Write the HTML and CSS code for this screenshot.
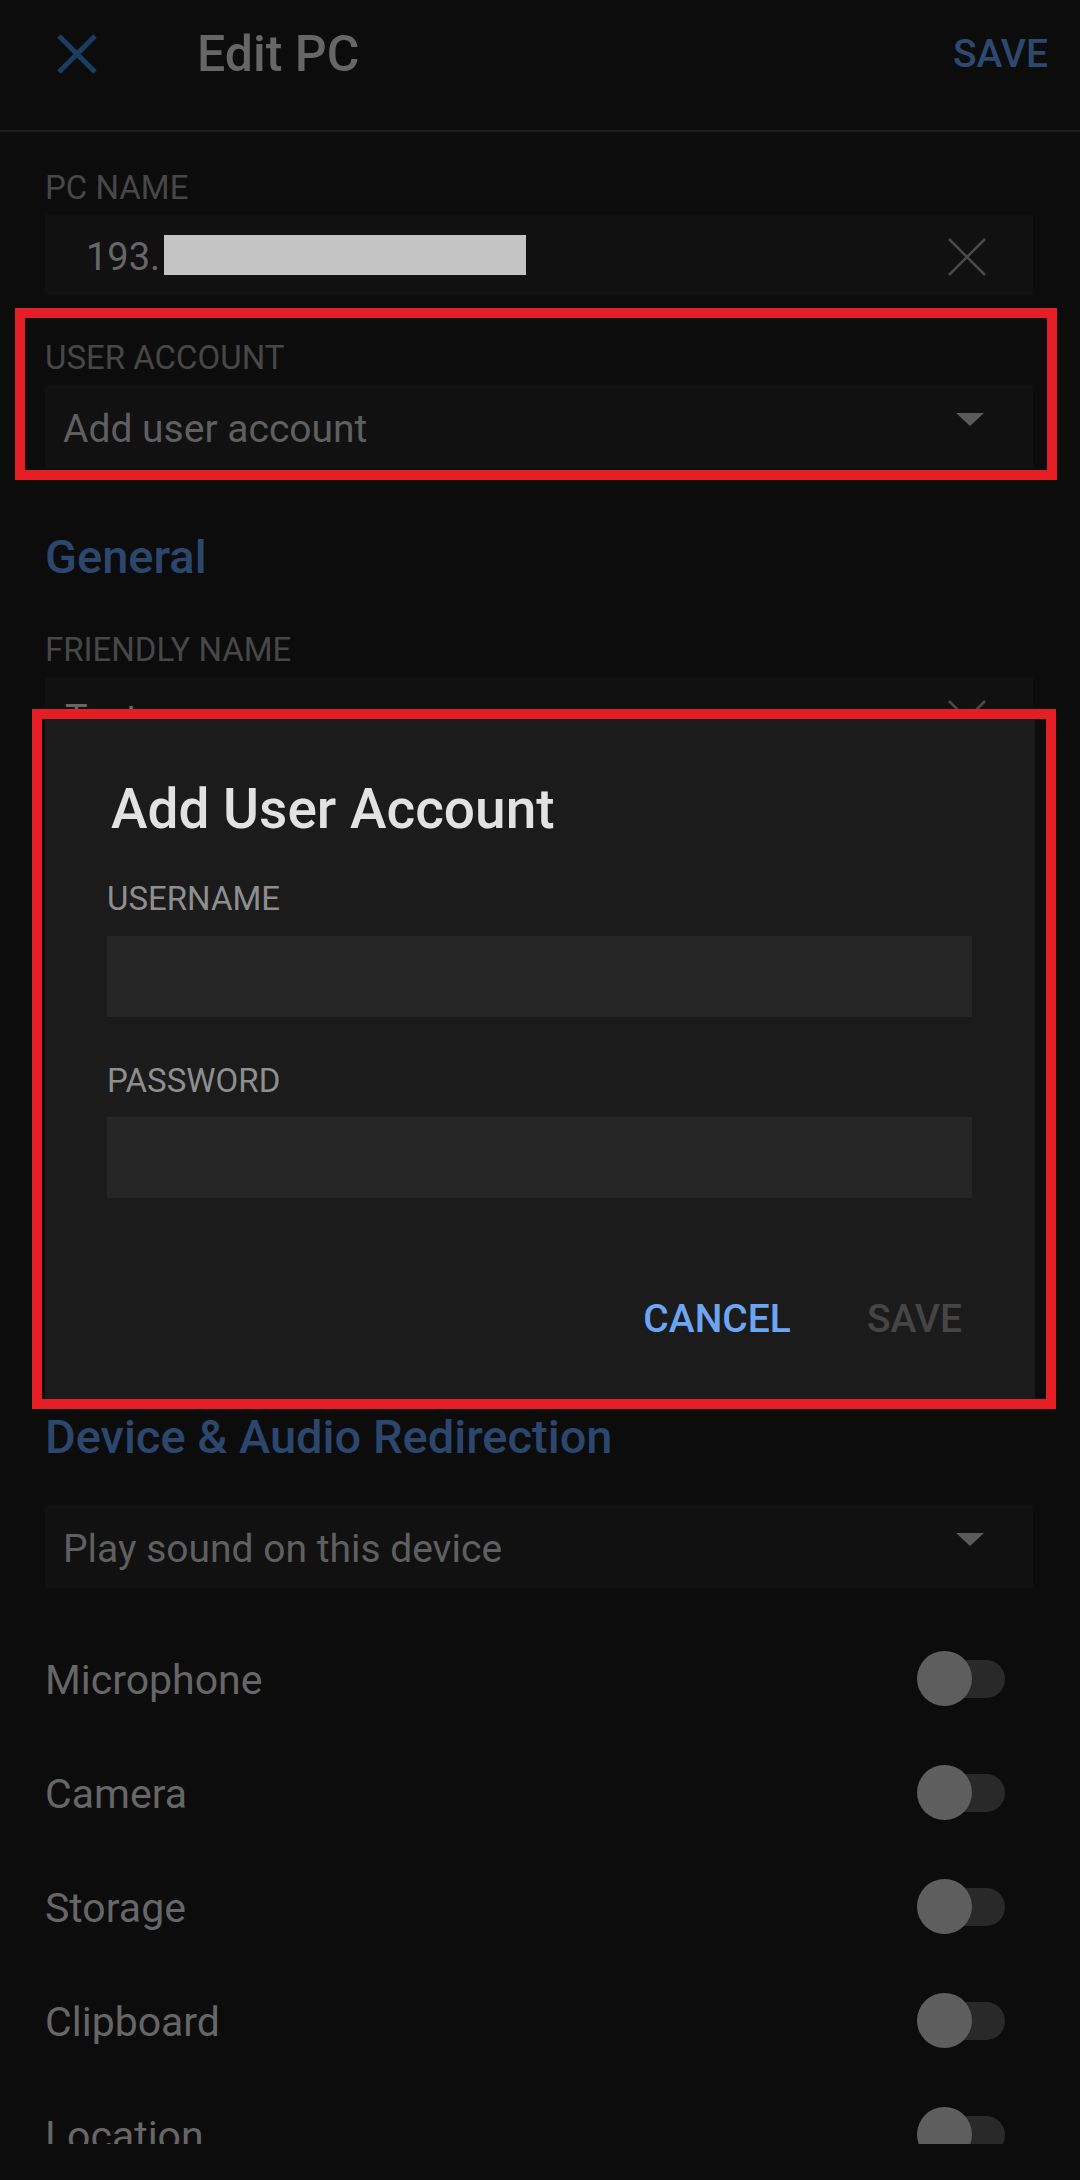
FILE: index.html
```html
<!DOCTYPE html>
<html lang="en">
<head>
<meta charset="utf-8">
<title>Edit PC</title>
<link rel="stylesheet" href="styles.css">
</head>
<body>
<div class="screen">
  <header class="appbar">
    <svg class="close-icon" width="40" height="40" viewBox="0 0 40 40" aria-hidden="true">
      <path d="M2 2 L38 38 M38 2 L2 38" stroke="#1a3d63" stroke-width="5" fill="none"/>
    </svg>
    <h1 class="appbar-title">Edit PC</h1>
    <span class="appbar-action">SAVE</span>
  </header>

  <main class="content">
    <div class="field field--first">
      <div class="label">PC NAME</div>
      <div class="input">
        <span class="input-value">193.</span><span class="redact"></span>
        <svg class="clear-icon" width="40" height="40" viewBox="0 0 40 40" aria-hidden="true">
          <path d="M2 2 L38 38 M38 2 L2 38" stroke="#4a4a4a" stroke-width="2.5" fill="none"/>
        </svg>
      </div>
    </div>

    <div class="field">
      <div class="label">USER ACCOUNT</div>
      <div class="select"><span class="select-text">Add user account</span><span class="caret"></span></div>
    </div>

    <h2 class="section-title">General</h2>

    <div class="field">
      <div class="label">FRIENDLY NAME</div>
      <div class="input input--plain">
        <span class="input-value input-value--plain">Test</span>
        <svg class="clear-icon" width="40" height="40" viewBox="0 0 40 40" aria-hidden="true">
          <path d="M2 2 L38 38 M38 2 L2 38" stroke="#4a4a4a" stroke-width="2.5" fill="none"/>
        </svg>
      </div>
    </div>

    <h2 class="section-title section-title--after-dialog">Device &amp; Audio Redirection</h2>

    <div class="select select--solo"><span class="select-text">Play sound on this device</span><span class="caret"></span></div>

    <ul class="toggles">
      <li class="toggle-row"><span class="toggle-label">Microphone</span><span class="switch"><span class="track"></span><span class="thumb"></span></span></li>
      <li class="toggle-row"><span class="toggle-label">Camera</span><span class="switch"><span class="track"></span><span class="thumb"></span></span></li>
      <li class="toggle-row"><span class="toggle-label">Storage</span><span class="switch"><span class="track"></span><span class="thumb"></span></span></li>
      <li class="toggle-row"><span class="toggle-label">Clipboard</span><span class="switch"><span class="track"></span><span class="thumb"></span></span></li>
      <li class="toggle-row"><span class="toggle-label">Location</span><span class="switch"><span class="track"></span><span class="thumb"></span></span></li>
    </ul>
  </main>

  <div class="dialog" role="dialog">
    <h3 class="dialog-title">Add User Account</h3>
    <div class="dialog-label">USERNAME</div>
    <div class="dialog-input"></div>
    <div class="dialog-label dialog-label--next">PASSWORD</div>
    <div class="dialog-input dialog-input--next"></div>
    <div class="dialog-actions">
      <span class="dialog-btn dialog-btn--primary">CANCEL</span>
      <span class="dialog-btn dialog-btn--disabled">SAVE</span>
    </div>
  </div>

  <div class="mark mark--account"></div>
  <div class="mark mark--dialog"></div>
</div>
</body>
</html>
```

FILE: styles.css
```css
* { box-sizing: border-box; }

html, body {
  margin: 0;
  padding: 0;
  background: #0c0c0c;
}

body {
  font-family: Roboto, "Noto Sans", "Liberation Sans", sans-serif;
  color: #666666;
}

.screen {
  position: relative;
  width: 1080px;
  height: 2180px;
  overflow: hidden;
  background: #0c0c0c;
}

/* App bar */
.appbar {
  height: 132px;
  padding-bottom: 22px;
  border-bottom: 2px solid #1c1c1c;
  display: flex;
  align-items: center;
}

.close-icon {
  margin-left: 57px;
  flex: none;
}

.appbar-title {
  margin: 0 0 0 100px;
  font-size: 50px;
  line-height: 50px;
  font-weight: 500;
  color: #666666;
}

.appbar-action {
  margin-left: auto;
  margin-right: 32px;
  font-size: 39px;
  line-height: 39px;
  font-weight: 500;
  color: #2d4971;
}

/* Content */
.content {
  height: 2012px;
  overflow: hidden;
  padding: 0 47px 0 45px;
}

.field {
  margin-top: 46px;
}

.field--first {
  margin-top: 39px;
}

.section-title + .field {
  margin-top: 53px;
}

.label {
  font-size: 33px;
  line-height: 33px;
  color: #474747;
  margin-bottom: 11px;
}

.input {
  height: 80px;
  background: #111111;
  display: flex;
  align-items: center;
  padding: 4px 46px 0 41px;
}

.input--plain {
  padding-left: 20px;
}

.input-value {
  font-size: 38px;
  line-height: 38px;
  color: #666666;
}

.redact {
  display: inline-block;
  width: 362px;
  height: 40px;
  margin-left: 4px;
  margin-top: -4px;
  background: #c4c4c4;
}

.clear-icon {
  margin-left: auto;
  flex: none;
}

.select {
  height: 83px;
  background: #111111;
  display: flex;
  align-items: center;
  padding: 6px 49px 0 18px;
}

.select-text {
  font-size: 39px;
  line-height: 39px;
  color: #5f5f5f;
}

.caret {
  margin-left: auto;
  align-self: flex-start;
  margin-top: 22px;
  width: 0;
  height: 0;
  border-left: 14px solid transparent;
  border-right: 14px solid transparent;
  border-top: 13px solid #5a5a5a;
}

.section-title {
  margin: 66px 0 0;
  font-size: 47px;
  line-height: 46px;
  font-weight: 500;
  color: #2b476e;
}

/* The dialog covers the rest of the General section */
.section-title--after-dialog {
  margin-top: 657px;
}

.select--solo {
  margin-top: 45px;
}

.toggles {
  list-style: none;
  margin: 33px 0 0;
  padding: 0;
}

.toggle-row {
  height: 114px;
  display: flex;
  align-items: center;
  justify-content: space-between;
  padding-right: 28px;
}

.toggle-label {
  font-size: 41px;
  line-height: 40px;
  margin-top: 4px;
  color: #666666;
}

.switch {
  position: relative;
  width: 88px;
  height: 55px;
  flex: none;
}

.track {
  position: absolute;
  left: 14px;
  right: 0;
  top: 9px;
  height: 38px;
  border-radius: 19px;
  background: #292929;
}

.thumb {
  position: absolute;
  left: 0;
  top: 0;
  width: 55px;
  height: 55px;
  border-radius: 50%;
  background: #5e5e5e;
}

/* Dialog */
.dialog {
  position: absolute;
  left: 45px;
  top: 714px;
  width: 990px;
  height: 685px;
  background: #1b1b1b;
  padding: 68px 63px 0 62px;
  display: flex;
  flex-direction: column;
}

.dialog-title {
  margin: 0 0 0 4px;
  font-size: 55px;
  line-height: 55px;
  font-weight: 500;
  color: #e2e2e2;
}

.dialog-label {
  margin-top: 45px;
  font-size: 33px;
  line-height: 33px;
  color: #8e8e8e;
}

.dialog-label--next {
  margin-top: 47px;
}

.dialog-input {
  margin-top: 21px;
  height: 81px;
  background: #262626;
}

.dialog-input--next {
  margin-top: 20px;
}

.dialog-actions {
  margin-top: 102px;
  display: flex;
  justify-content: flex-end;
  gap: 76px;
  padding-right: 10px;
}

.dialog-btn {
  font-size: 39px;
  line-height: 39px;
  font-weight: 500;
}

.dialog-btn--primary {
  color: #6ba6f2;
}

.dialog-btn--disabled {
  color: #454545;
}

/* Red annotation rectangles */
.mark {
  position: absolute;
  border: 10px solid #e31e25;
  pointer-events: none;
}

.mark--account {
  left: 15px;
  top: 308px;
  width: 1042px;
  height: 172px;
}

.mark--dialog {
  left: 32px;
  top: 709px;
  width: 1024px;
  height: 700px;
}
```
